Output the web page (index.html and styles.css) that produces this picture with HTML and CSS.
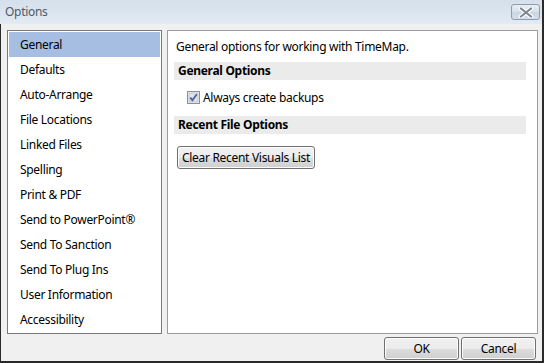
FILE: index.html
```html
<!DOCTYPE html>
<html>
<head>
<meta charset="utf-8">
<link rel="stylesheet" href="styles.css">
</head>
<body>
<div class="window">
  <div class="titlebar">
    <span class="title">Options</span>
    <button class="close" aria-label="Close">
      <svg width="16" height="11" viewBox="0 0 16 11">
        <path d="M3 1.5 L13 9.5 M13 1.5 L3 9.5" stroke="#ffffff" stroke-width="4.2" stroke-linecap="round" fill="none"/>
        <path d="M3 1.5 L13 9.5 M13 1.5 L3 9.5" stroke="#7d8693" stroke-width="2.2" stroke-linecap="round" fill="none"/>
      </svg>
    </button>
  </div>
  <div class="body">
    <div class="panels">
      <ul class="nav">
        <li class="nav-item selected">General</li>
        <li class="nav-item">Defaults</li>
        <li class="nav-item">Auto-Arrange</li>
        <li class="nav-item">File Locations</li>
        <li class="nav-item">Linked Files</li>
        <li class="nav-item">Spelling</li>
        <li class="nav-item">Print &amp; PDF</li>
        <li class="nav-item">Send to PowerPoint®</li>
        <li class="nav-item">Send To Sanction</li>
        <li class="nav-item">Send To Plug Ins</li>
        <li class="nav-item">User Information</li>
        <li class="nav-item">Accessibility</li>
      </ul>
      <div class="page">
        <p class="intro">General options for working with TimeMap.</p>
        <div class="band">General Options</div>
        <label class="check-row">
          <span class="checkbox">
            <svg width="13" height="13" viewBox="0 0 13 13">
              <rect x="0.5" y="0.5" width="12" height="12" fill="#f4f4f4" stroke="#8e8f8f"/>
              <rect x="2" y="2" width="9" height="9" fill="#dfe3ea" stroke="#aab0bb" stroke-width="0.6"/>
              <path d="M3.3 6.6 L5.4 9.2 L9.8 3.2" stroke="#4a5f97" stroke-width="1.8" fill="none"/>
            </svg>
          </span>
          <span class="check-label">Always create backups</span>
        </label>
        <div class="band">Recent File Options</div>
        <button class="btn wide">Clear Recent Visuals List</button>
      </div>
    </div>
    <div class="footer">
      <button class="btn action">OK</button>
      <button class="btn action">Cancel</button>
    </div>
  </div>
</div>
</body>
</html>
```
FILE: styles.css
```css
* { box-sizing: border-box; }
html, body { margin: 0; padding: 0; }
body {
  font-family: "Noto Sans", "Open Sans", sans-serif;
  font-size: 12px;
  letter-spacing: -0.3px;
  color: #000;
  background: #f0f0f0;
}
.window {
  width: 544px;
  height: 363px;
  border-right: 2px solid #2a2a2a;
  border-bottom: 2px solid #2a2a2a;
  background: #f0f0f0;
  display: flex;
  flex-direction: column;
}
.titlebar {
  height: 24px;
  flex: none;
  background: linear-gradient(#d5e0ec, #e2eaf3);
  display: flex;
  align-items: center;
  justify-content: space-between;
  padding: 0 2px 0 5px;
}
.title {
  color: #4b5a6c;
  font-size: 12px;
  line-height: 16px;
}
.close {
  width: 29px;
  height: 16px;
  border: 1px solid #8d9cb0;
  border-radius: 3px;
  background: linear-gradient(#e9eef5, #d7dfe9 50%, #cad5e2 51%, #d6dfea);
  display: flex;
  align-items: center;
  justify-content: center;
  padding: 0;
}
.body {
  flex: 1;
  border-left: 1px solid #2a2a2a;
  padding: 6px 4px 0 6px;
  display: flex;
  flex-direction: column;
}
.panels {
  height: 304px;
  display: flex;
  gap: 5px;
}
.nav {
  list-style: none;
  margin: 0;
  padding: 1px;
  width: 155px;
  border: 1px solid #7a7a7a;
  background: #fff;
}
.nav-item {
  height: 25px;
  line-height: 25px;
  padding-left: 11px;
  white-space: nowrap;
}
.nav-item.selected {
  background: #a5bee2;
}
.page {
  width: 371px;
  border: 1px solid #9c9c9c;
  background: #fff;
  padding: 0 11px 0 6px;
  display: flex;
  flex-direction: column;
  align-items: flex-start;
}
.intro {
  margin: 8px 0 7px 2px;
  line-height: 16px;
}
.band {
  align-self: stretch;
  height: 18px;
  line-height: 18px;
  background: #ebebeb;
  font-weight: bold;
  padding-left: 4px;
}
.check-row {
  display: flex;
  align-items: center;
  height: 13px;
  margin: 11px 0 12px 13px;
}
.checkbox { width: 13px; height: 13px; display: block; }
.checkbox svg { display: block; }
.check-label { margin-left: 3px; line-height: 13px; }
.btn {
  font-family: inherit;
  font-size: 12px;
  letter-spacing: -0.3px;
  color: #000;
  height: 23px;
  border: 1px solid #707070;
  border-radius: 3px;
  background: linear-gradient(#f2f2f2, #ebebeb 50%, #dddddd 51%, #cfcfcf);
  box-shadow: inset 0 0 0 1px #fcfcfc;
  padding: 0;
}
.wide {
  width: 138px;
  margin: 12px 0 0 3px;
}
.footer {
  display: flex;
  justify-content: flex-end;
  gap: 2px;
  padding: 3px 2px 0 0;
}
.action { width: 75px; }
```
